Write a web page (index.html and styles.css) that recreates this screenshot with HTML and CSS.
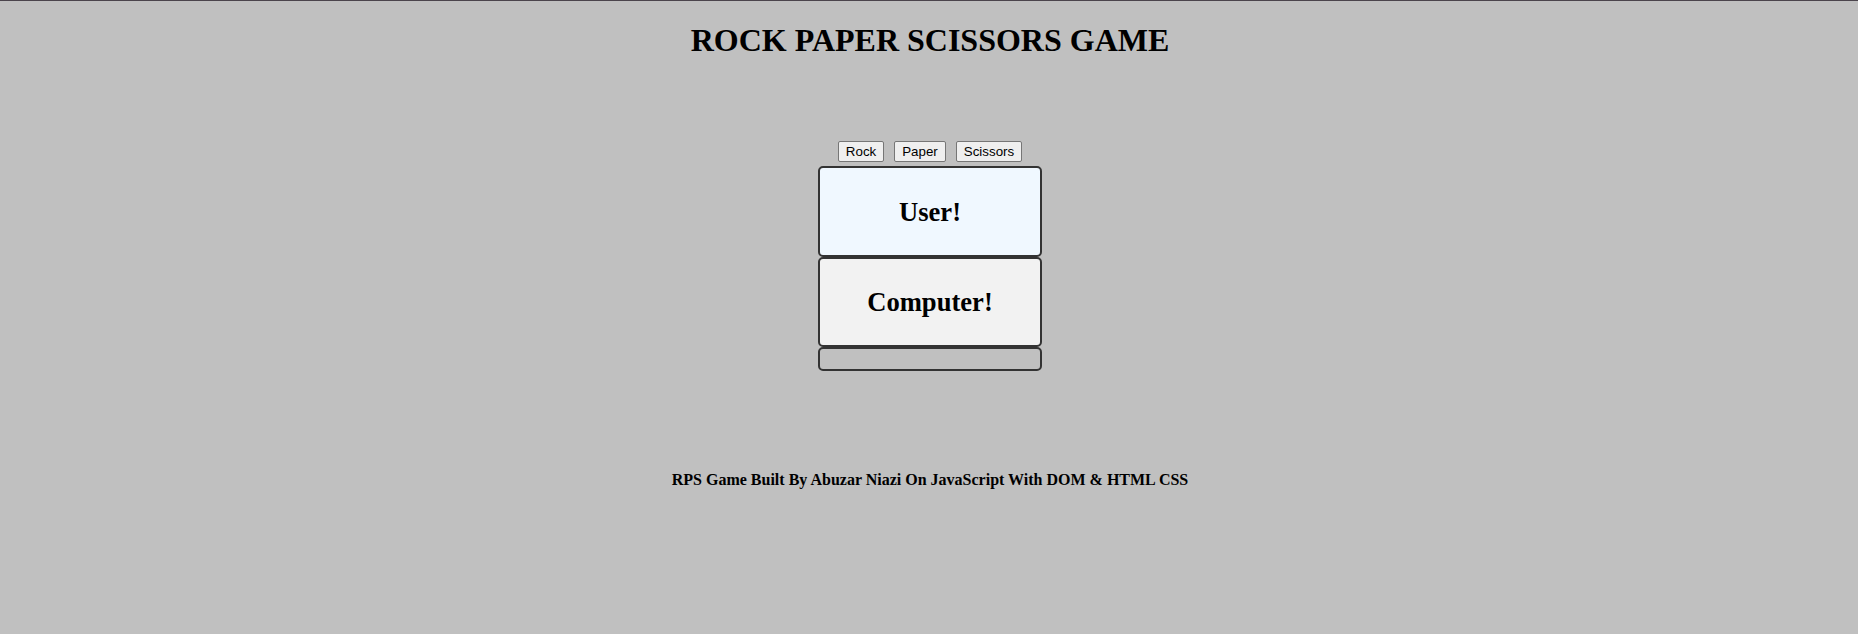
FILE: index.html
```html
<!DOCTYPE html>
<html lang="en">
<head>
<meta charset="utf-8">
<title>Rock Paper Scissors Game</title>
<link rel="stylesheet" href="styles.css">
</head>
<body>
<div class="topline"></div>
<h1 class="title">ROCK PAPER SCISSORS GAME</h1>
<div class="choices">
  <button class="choice">Rock</button>
  <button class="choice">Paper</button>
  <button class="choice">Scissors</button>
</div>
<div class="board">
  <div class="panel panel-user"><h2 class="panel-text">User!</h2></div>
  <div class="panel panel-computer"><h2 class="panel-text">Computer!</h2></div>
  <div class="panel panel-result"></div>
</div>
<p class="credit">RPS Game Built By Abuzar Niazi On JavaScript With DOM &amp; HTML CSS</p>
</body>
</html>
```

FILE: styles.css
```css
html, body {
  margin: 0;
  padding: 0;
  background: #c0c0c0;
}

body {
  font-family: "Liberation Serif", "Times New Roman", serif;
  color: #000;
}

.topline {
  height: 1px;
  background: #4b444c;
}

.title,
.choices,
.board,
.credit {
  padding-left: 2px;
}

.title {
  margin: 21px 0 0;
  font-size: 32px;
  line-height: 37px;
  font-weight: bold;
  text-align: center;
}

.choices {
  display: flex;
  justify-content: center;
  gap: 10px;
  margin-top: 82px;
}

.choice {
  height: 21px;
  margin: 0;
  padding: 1px 7px;
  font-family: "Liberation Sans", Arial, sans-serif;
  font-size: 13.333px;
  line-height: 15px;
  color: #000;
  background: #efefef;
  border: 1px solid #767676;
  border-radius: 2px;
  box-sizing: border-box;
}

.board {
  display: flex;
  flex-direction: column;
  align-items: center;
  margin-top: 4px;
}

.panel {
  width: 224px;
  box-sizing: border-box;
  border: 2px solid #333;
  border-radius: 5px;
  display: flex;
  align-items: center;
  justify-content: center;
}

.panel-user {
  height: 91px;
  background: #f0f8ff;
}

.panel-computer {
  height: 90px;
  background: #f2f2f2;
}

.panel-result {
  height: 24px;
  background: transparent;
}

.panel-text {
  margin: 0;
  font-size: 26.6px;
  line-height: 30px;
  font-weight: bold;
}

.credit {
  margin: 99px 0 0;
  text-align: center;
  font-size: 16px;
  font-weight: bold;
  line-height: 19px;
}
```
